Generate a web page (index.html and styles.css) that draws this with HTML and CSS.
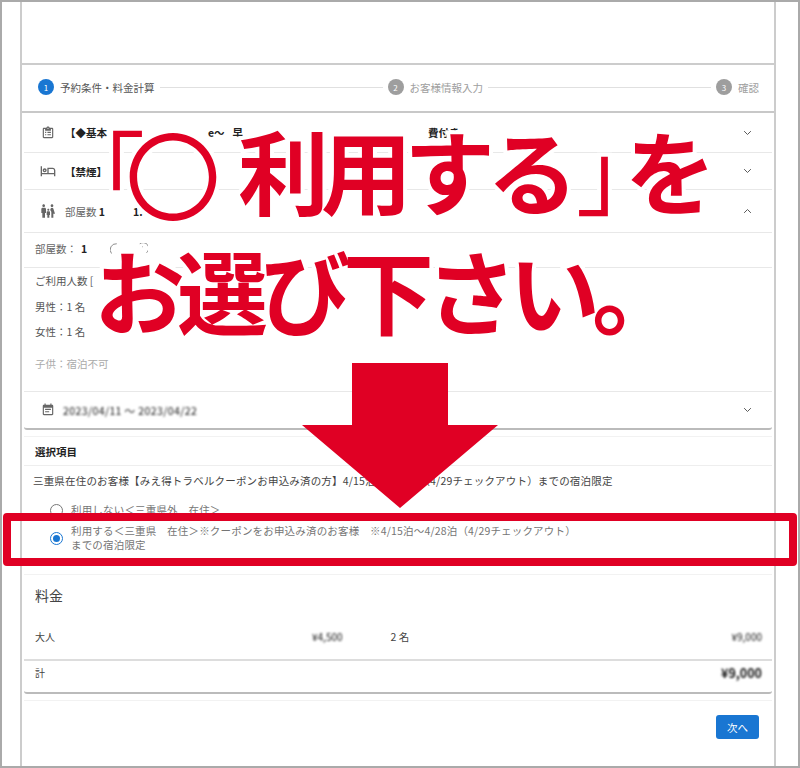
FILE: index.html
```html
<!DOCTYPE html>
<html lang="ja">
<head>
<meta charset="utf-8">
<title>予約条件・料金計算</title>
<link rel="stylesheet" href="styles.css">
</head>
<body>
<div class="frame">
  <main class="page">
    <div class="topbar"></div>
    <nav class="stepper">
      <span class="dot dot-on">1</span><span class="step-label">予約条件・料金計算</span><span class="step-line"></span>
      <span class="dot">2</span><span class="step-label muted">お客様情報入力</span><span class="step-line"></span>
      <span class="dot">3</span><span class="step-label muted">確認</span>
    </nav>
    <section class="panel">
      <div class="row row-a">
        <svg class="icon" viewBox="0 0 24 24"><path d="M19 3h-4.18C14.4 1.84 13.3 1 12 1s-2.4.84-2.82 2H5c-1.1 0-2 .9-2 2v14c0 1.1.9 2 2 2h14c1.1 0 2-.9 2-2V5c0-1.1-.9-2-2-2zm-7 0c.55 0 1 .45 1 1s-.45 1-1 1-1-.45-1-1 .45-1 1-1zm7 16H5V5h2v3h10V5h2v14zM7 10h2v2H7zm4 0h6v2h-6zm-4 4h2v2H7zm4 0h6v2h-6z"/></svg>
        <b class="frag">【◆基本</b><b class="frag gap-a">e〜</b><b class="frag gap-b">早</b><b class="frag gap-c">費付き</b>
        <svg class="chev" viewBox="0 0 12 8"><path d="M1.5 1.5 6 6l4.5-4.5"/></svg>
      </div>
      <div class="row row-b">
        <svg class="icon icon-bed" viewBox="0 0 24 24"><path d="M7 14c1.66 0 3-1.34 3-3S8.66 8 7 8s-3 1.34-3 3 1.34 3 3 3zm0-4c.55 0 1 .45 1 1s-.45 1-1 1-1-.45-1-1 .45-1 1-1zm12-3h-8v8H3V5H1v15h2v-3h18v3h2v-9c0-2.21-1.79-4-4-4zm2 8h-8V9h6c1.1 0 2 .9 2 2v4z"/></svg>
        <b class="frag">【禁煙】</b>
        <svg class="chev" viewBox="0 0 12 8"><path d="M1.5 1.5 6 6l4.5-4.5"/></svg>
      </div>
      <div class="row row-c">
        <svg class="icon icon-people" viewBox="0 0 24 24"><path d="M16 4c0-1.11.89-2 2-2s2 .89 2 2-.89 2-2 2-2-.89-2-2zm4 18v-6h2.5l-2.54-7.63C19.68 7.55 18.92 7 18.06 7h-.12c-.86 0-1.63.55-1.9 1.37l-.86 2.58c1.08.6 1.82 1.73 1.82 3.05v8h3zm-7.5-10.5c.83 0 1.5-.67 1.5-1.5s-.67-1.5-1.5-1.5S11 9.17 11 10s.67 1.5 1.5 1.5zM5.5 6c1.11 0 2-.89 2-2s-.89-2-2-2-2 .89-2 2 .89 2 2 2zm2 16v-7H9V9c0-1.1-.9-2-2-2H4c-1.1 0-2 .9-2 2v6h1.5v7h4zm6.5 0v-4h1v-4c0-.82-.68-1.5-1.5-1.5h-2c-.82 0-1.5.68-1.5 1.5v4h1v4h3z"/></svg>
        <span class="frag soft">部屋数 <b>1</b></span><b class="frag gap-d">1.</b>
        <svg class="chev" viewBox="0 0 12 8"><path d="M1.5 6.5 6 2l4.5 4.5"/></svg>
      </div>
      <div class="rooms">
        <span class="soft">部屋数：</span><b class="room-num">1</b>
        <svg class="arc arc-a" viewBox="0 0 16 16"><path d="M2 14A8 8 0 0 1 9 1"/></svg>
        <svg class="arc" viewBox="0 0 16 16"><path d="M5 1a7.500 7.500 0 0 1 9 12M8 5h.8"/></svg>
      </div>
      <div class="guests">
        <p class="guest">ご利用人数 [</p>
        <p class="guest">男性：1 名</p>
        <p class="guest">女性：1 名</p>
        <p class="guest guest-none">子供：宿泊不可</p>
      </div>
      <div class="row row-date">
        <svg class="icon" viewBox="0 0 24 24"><path d="M17 10H7v2h10v-2zm2-7h-1V1h-2v2H8V1H6v2H5c-1.110 0-1.990.9-1.990 2L3 19c0 1.100.89 2 2 2h14c1.100 0 2-.9 2-2V5c0-1.100-.9-2-2-2zm0 16H5V8h14v11zm-5-5H7v2h7v-2z"/></svg>
        <span class="blur blur-date">2023/04/11 ～ 2023/04/22</span>
        <svg class="chev" viewBox="0 0 12 8"><path d="M1.5 1.5 6 6l4.5-4.5"/></svg>
      </div>
    </section>
    <section class="choices">
      <h2 class="choices-title">選択項目</h2>
      <p class="choices-text">三重県在住のお客様【みえ得トラベルクーポンお申込み済の方】4/15泊〜4/28泊（4/29チェックアウト）までの宿泊限定</p>
      <label class="option option-a"><span class="radio"></span><span>利用しない＜三重県外　在住＞</span></label>
      <label class="option option-b"><span class="radio radio-on"></span><span>利用する＜三重県　在住＞※クーポンをお申込み済のお客様　※4/15泊〜4/28泊（4/29チェックアウト）<br>までの宿泊限定</span></label>
    </section>
    <section class="fees">
      <h2 class="fees-title">料金</h2>
      <div class="fee-row">
        <span class="fee-name">大人</span><span class="blur fee-unit">¥4,500</span><span class="fee-qty">2 名</span><span class="blur fee-sum">¥9,000</span>
      </div>
      <div class="fee-total">
        <span class="fee-name">計</span><span class="blur total-sum">¥9,000</span>
      </div>
    </section>
    <div class="actions"><button class="next">次へ</button></div>
  </main>

  <div class="callout">
    <div class="callout-line"><span class="q-open">「</span><span class="ring">〇</span><span class="use">利用する</span><span class="q-close">」</span><span class="wo">を</span></div>
    <div class="callout-line callout-line2">お選び下さい。</div>
  </div>
  <svg class="arrow" viewBox="0 0 196 145"><polygon points="50,0 146,0 146,62 196,62 98,145 0,62 50,62"/></svg>
  <div class="highlight"></div>
</div>
</body>
</html>
```

FILE: styles.css
```css
* { box-sizing: border-box; }
html, body { margin: 0; padding: 0; background: #fff; }
body {
  font-family: "Noto Sans CJK JP", "Noto Sans", sans-serif;
  font-size: 10.5px;
  color: #444;
}
p, h2 { margin: 0; font-weight: inherit; font-size: inherit; }
.frame {
  position: relative;
  width: 800px;
  height: 768px;
  border: 2px solid #aaa;
  overflow: hidden;
  padding-left: 18px;
}
.page {
  width: 756px;
  height: 764px;
  border-left: 2px solid #ccc;
  border-right: 2px solid #ccc;
}
.topbar { height: 63px; border-bottom: 2px solid #ccc; }
.stepper {
  height: 48px;
  border-bottom: 2px solid #c8c8c8;
  display: flex;
  align-items: center;
  padding: 0 15px 2px 16px;
  gap: 5px;
}
.dot {
  width: 16px; height: 16px; border-radius: 50%;
  background: #9e9e9e; color: #fff;
  font-size: 8px;
  display: flex; align-items: center; justify-content: center;
  flex: none;
}
.dot-on { background: #1976d2; }
.step-label { color: #555; margin-left: 1px; white-space: nowrap; }
.step-label.muted { color: #9e9e9e; }
.step-line { flex: 1; height: 1px; background: #e0e0e0; }

.panel { margin: 0 2px; }
.row { display: flex; align-items: center; position: relative; padding-left: 17px; border-bottom: 1px solid #e8e8e8; }
.row-a { height: 40px; }
.row-b { height: 37px; }
.row-c { height: 43px; }
.row-date { height: 38px; border-bottom: 2px solid #bbb; border-radius: 0 0 3px 3px; }
.icon { width: 14px; height: 14px; fill: #666; flex: none; }
.icon-bed { width: 16px; height: 16px; margin: 0 -1px 0 -1px; }
.icon-people { width: 16px; height: 16px; margin-left: -1px; }
.frag { white-space: nowrap; color: #222; margin-left: 10px; }
.row-c .frag { margin-left: 9px; }
.soft { color: #666; }
.soft b { color: #222; }
.row-c .gap-d { margin-left: 28px; }
.gap-a { margin-left: 101px; }
.gap-b { margin-left: 8px; }
.gap-c { margin-left: 185px; }
.chev {
  position: absolute;
  right: 20px; top: 50%;
  margin-top: -3px;
  width: 9px; height: 6px;
  fill: none; stroke: #555; stroke-width: 1.300;
}
.rooms {
  height: 35px;
  display: flex; align-items: center;
  padding: 0 0 3px 11px;
  border-bottom: 1px solid #e8e8e8;
}
.room-num { color: #222; margin-left: 4px; }
.arc { width: 12px; height: 12px; fill: none; stroke: #666; stroke-width: 1; margin-left: 14px; }
.arc-a { margin-left: 23px; }
.guests { height: 124px; padding-left: 11px; border-bottom: 1px solid #e8e8e8; }
.guest { height: 25.500px; line-height: 26px; color: #555; }
.guest-none { color: #aaa; margin-top: 6px; }
.blur { filter: blur(1.200px); color: #111; white-space: nowrap; }
.blur-date { margin-left: 8px; letter-spacing: .4px; }

.choices { margin: 6px 2px 0; border-top: 1px solid #f2f2f2; }
.choices-title { height: 29px; line-height: 29px; font-weight: 700; color: #222; padding-left: 11px; border-bottom: 1px solid #eee; }
.choices-text { height: 30px; line-height: 30px; padding-left: 9px; white-space: nowrap; color: #444; letter-spacing: .18px; }
.option { display: flex; align-items: center; gap: 8px; height: 28px; padding-left: 26px; line-height: 14px; color: #757575; letter-spacing: .18px; }
.radio { width: 13px; height: 13px; border: 1.500px solid #777; border-radius: 50%; flex: none; display: flex; align-items: center; justify-content: center; }
.radio-on { border-color: #1976d2; }
.radio-on::after { content: ""; width: 7px; height: 7px; border-radius: 50%; background: #1976d2; }

.fees { margin: 22px 2px 0; border-top: 1px solid #f2f2f2; }
.fees-title { height: 41px; line-height: 41px; font-size: 14px; color: #444; padding-left: 11px; }
.fee-row { height: 45px; display: flex; align-items: center; padding: 0 10px 3px 11px; border-bottom: 2px solid #ddd; position: relative; }
.fee-name { font-size: 10px; color: #444; }
.fee-unit { margin-left: 257px; font-size: 10px; }
.fee-qty { margin-left: 48px; }
.fee-sum { margin-left: auto; font-size: 10px; }
.fee-total { height: 33px; display: flex; align-items: flex-start; padding: 2px 10px 0 11px; border-bottom: 2px solid #bbb; border-radius: 0 0 3px 3px; }
.fee-total .fee-name { padding-top: 2px; }
.total-sum { margin-left: auto; font-size: 12.500px; font-weight: 700; }
.actions { margin: 6px 2px 0; padding: 14px 13px 0 0; border-top: 1px solid #f2f2f2; display: flex; justify-content: flex-end; }
.next { width: 43px; height: 24px; padding: 0; border: 0; border-radius: 3px; background: #1976d2; color: #fff; font: inherit; }

.callout {
  position: absolute;
  left: 92px; top: 106px;
  color: #e00024;
  font-size: 91px;
  font-weight: 700;
  line-height: 120px;
  white-space: nowrap;
}
.callout-line { display: flex; -webkit-text-stroke: 8px #fff; paint-order: stroke fill; }
.callout-line span { paint-order: stroke fill; -webkit-text-stroke: inherit; }
.callout-line2 { display: block; letter-spacing: -8px; }
.q-open { margin-left: -40px; width: 71px; font-weight: 400; }
.ring { width: 95px; font-size: 96px; font-weight: 400; margin: 4px 0 -4px; }
.use { letter-spacing: -8px; margin-left: 18px; }
.q-close { margin-left: 6px; font-weight: 400; }
.wo { margin-left: -42px; }
.arrow { position: absolute; left: 300px; top: 361px; width: 196px; height: 145px; fill: #e00024; }
.highlight {
  position: absolute;
  left: 1px; top: 511px;
  width: 794px; height: 53px;
  border: 8px solid #e00024;
  border-radius: 4px;
}
```
